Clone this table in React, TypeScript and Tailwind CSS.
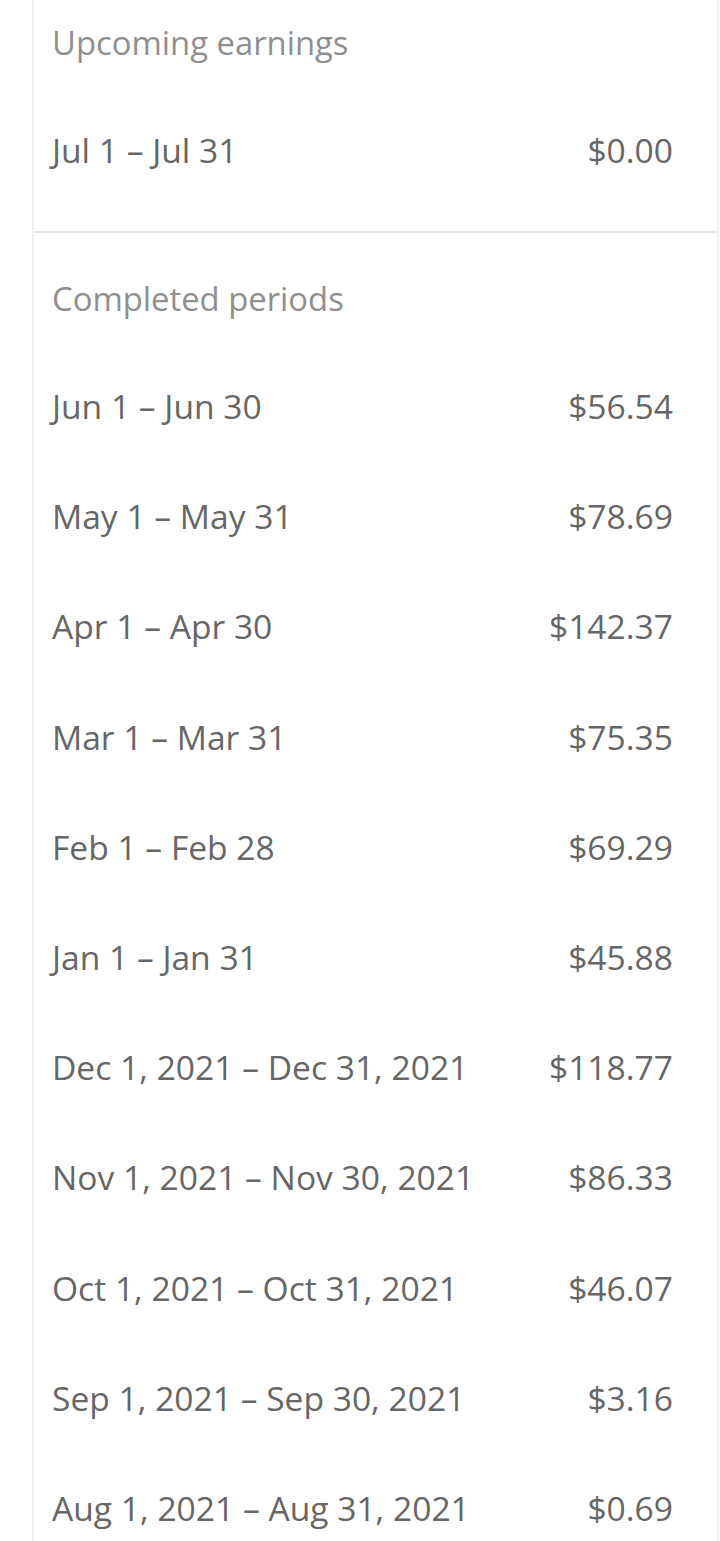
import React from "react";

const upcoming = [{ label: "Jul 1 – Jul 31", amount: "$0.00" }];

const completed = [
  { label: "Jun 1 – Jun 30", amount: "$56.54" },
  { label: "May 1 – May 31", amount: "$78.69" },
  { label: "Apr 1 – Apr 30", amount: "$142.37" },
  { label: "Mar 1 – Mar 31", amount: "$75.35" },
  { label: "Feb 1 – Feb 28", amount: "$69.29" },
  { label: "Jan 1 – Jan 31", amount: "$45.88" },
  { label: "Dec 1, 2021 – Dec 31, 2021", amount: "$118.77" },
  { label: "Nov 1, 2021 – Nov 30, 2021", amount: "$86.33" },
  { label: "Oct 1, 2021 – Oct 31, 2021", amount: "$46.07" },
  { label: "Sep 1, 2021 – Sep 30, 2021", amount: "$3.16" },
  { label: "Aug 1, 2021 – Aug 31, 2021", amount: "$0.69" },
];

function Row({ label, amount }: { label: string; amount: string }) {
  return (
    <div className="flex h-[110.2px] items-center justify-between">
      <span>{label}</span>
      <span>{amount}</span>
    </div>
  );
}

export default function App() {
  return (
    <div className="h-[1541px] w-[720px] overflow-hidden bg-white font-['Open_Sans',sans-serif]">
      <div className="ml-[32px] w-[687px] border-x-2 border-[#f0f0f0] text-[33.6px] text-[#666666]">
        <section className="border-b-2 border-[#e6e6e6] pb-[26px] pl-[18px] pr-[44px] pt-[21px]">
          <div className="mb-[30px] text-[32.8px] leading-[44px] text-[#8f8f8f]">Upcoming earnings</div>
          {upcoming.map((r) => (
            <Row key={r.label} {...r} />
          ))}
        </section>
        <section className="pl-[18px] pr-[44px] pt-[44px]">
          <div className="mb-[30px] text-[32.8px] leading-[44px] text-[#8f8f8f]">Completed periods</div>
          {completed.map((r) => (
            <Row key={r.label} {...r} />
          ))}
        </section>
      </div>
    </div>
  );
}
